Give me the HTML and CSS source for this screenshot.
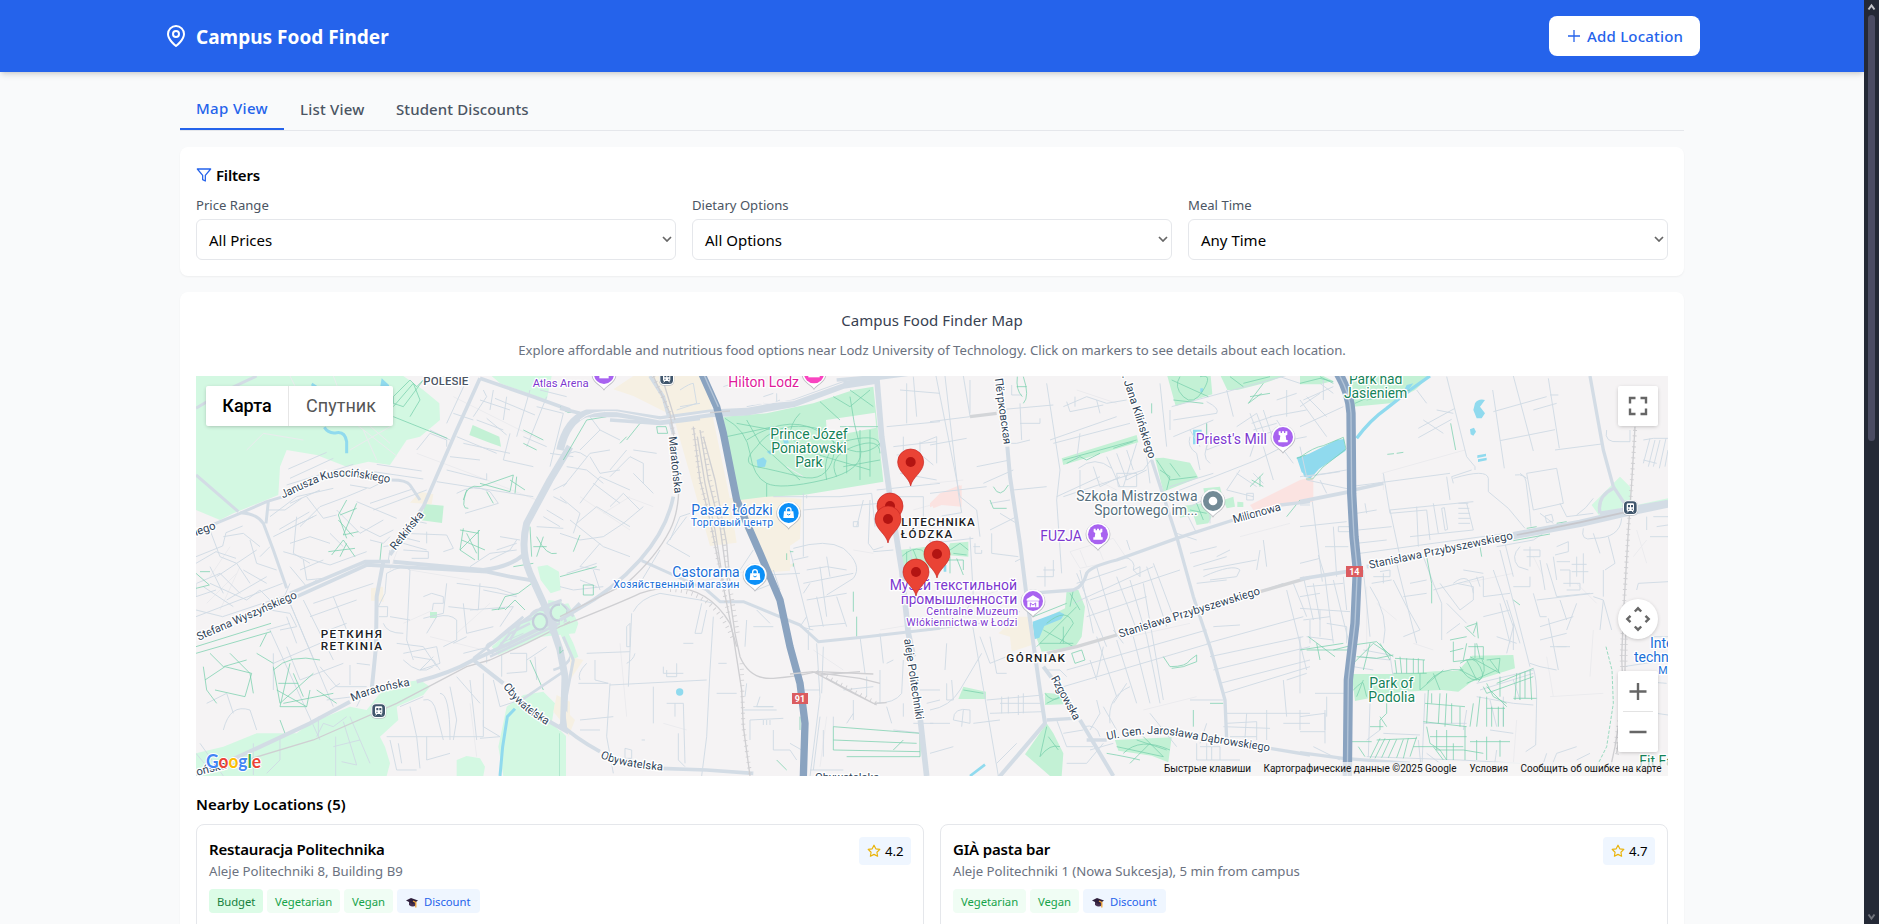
FILE: index.html
```html
<!DOCTYPE html>
<html lang="en">
<head>
<meta charset="utf-8">
<title>Campus Food Finder</title>
<link rel="stylesheet" href="styles.css">
</head>
<body>
<div class="page">
<header class="header">
  <div class="header-inner">
    <div class="brand">
      <svg class="brand-icon" viewBox="0 0 24 24"><path d="M20 10c0 6-8 12-8 12s-8-6-8-12a8 8 0 0 1 16 0Z"/><circle cx="12" cy="10" r="3"/></svg>
      <h1 class="brand-name">Campus Food Finder</h1>
    </div>
    <button class="add-btn"><svg class="plus" viewBox="0 0 16 16"><path d="M8 2v12M2 8h12"/></svg><span>Add Location</span></button>
  </div>
</header>
<main class="main">
  <nav class="tabs">
    <button class="tab tab-active">Map View</button>
    <button class="tab tab-list">List View</button>
    <button class="tab">Student Discounts</button>
  </nav>
  <section class="card filters">
    <h2 class="filters-title"><svg class="funnel" viewBox="0 0 24 24"><path d="M22 3H2l8 9.500V19l4 2v-8.500L22 3z"/></svg>Filters</h2>
    <div class="filter-grid">
      <div><label class="label">Price Range</label><div class="select">All Prices<svg class="chev" viewBox="0 0 10 6"><path d="M1 1l4 4 4-4"/></svg></div></div>
      <div><label class="label">Dietary Options</label><div class="select">All Options<svg class="chev" viewBox="0 0 10 6"><path d="M1 1l4 4 4-4"/></svg></div></div>
      <div><label class="label">Meal Time</label><div class="select">Any Time<svg class="chev" viewBox="0 0 10 6"><path d="M1 1l4 4 4-4"/></svg></div></div>
    </div>
  </section>
  <section class="card map-card">
    <p class="map-title">Campus Food Finder Map</p>
    <p class="map-sub">Explore affordable and nutritious food options near Lodz University of Technology. Click on markers to see details about each location.</p>
    <div class="map">
    <svg class="map-svg" viewBox="0 0 1472 400">
      <defs>
        <g id="pin"><path d="M0 0C-4-26-39-42-39-72a39 39 0 0 1 78 0C39-42 4-26 0 0z" fill="#ea4335" stroke="#c5221f" stroke-width="2"/><circle cy="-72" r="15" fill="#b31412"/></g>
        <g id="poi"><path d="M0 50C-7 36-37 27-37 2a37 37 0 0 1 74 0C37 27 7 36 0 50z" fill="#a5a9b0" opacity=".75"/><path d="M0 46C-7 34-35 25-35 0a35 35 0 0 1 70 0C35 25 7 34 0 46z" fill="#fff"/><circle r="30"/></g>
        <g id="bag" fill="#fff"><path d="M-14-5h28l2 20h-32z"/><path d="M-7-4v-5a7 7 0 0 1 14 0v5" fill="none" stroke="#fff" stroke-width="4"/><path d="M-5 3q5 6 10 0" fill="none" stroke="#0b90f8" stroke-width="3"/></g>
        <g id="rook" fill="#fff"><path d="M-13-17h6v5h4v-5h6v5h4v-5h6v10l-5 3 2 13h4v7h-28v-7h4l2-13-5-3z"/></g>
        <g id="train"><rect x="-23" y="-22" width="46" height="47" rx="15" fill="#b5b9c0" opacity=".7"/><rect x="-22" y="-22" width="44" height="44" rx="14" fill="#fff"/><rect x="-19" y="-19" width="38" height="38" rx="11" fill="#40566c"/><rect x="-11" y="-13" width="22" height="23" rx="4" fill="#fff"/><path d="M-7-8h6v7h-6zM2-8h6v7h-6zM-7 3h4v3h-4zM4 3h4v3h-4z" fill="#40566c"/><path d="M-9 14l4-5M9 14l-4-5" stroke="#fff" stroke-width="3"/></g>
      </defs>
      <rect width="1472" height="400" fill="#f5f3f4"/>

      <!-- west: Polesie, Retkinia -->
      <g transform="translate(-6 -6) scale(.33333)">
        <g class="park-light">
          <path d="M18 18H640L700 60 748 100 750 150 690 200 650 210 600 285 535 275 470 290 380 255 290 240 270 290 265 375 130 430 90 450 18 420z"/>
          <path d="M18 1218V1150L100 1130 200 1090 320 1090 360 1060 480 1010 530 1020 570 970 620 940 690 930 720 950 700 975 620 1010 625 1050 570 1100 585 1130 600 1180 590 1218z"/>
          <path d="M800 1218V1170L830 1158 870 1165 885 1190 880 1218zM940 1218L925 1130 950 1010 1000 975 1060 965 1095 1000 1085 1060 1128 1100 1128 1218z"/>
          <path d="M905 18H1085L1070 90 930 40zM1042 590l30-5 35 20 5 55-30 10-30-40zM1075 690l40 5 15 60-30 15-30-20zM905 830l100-85 50-30 80-15 30 60 -10 30-100 10-130 55z"/>
        </g>
        <path class="park" d="M848 165l80 35 5 30-30-10-65-25zM705 402l56 5-5 52-62-8zM720 726h21v18h-21z"/>
        <path class="sand" d="M690 365l40 8-5 30-65-5zM543 655l36-5 2 45-38-3zM1100 975l40 20v90l-50-60z"/>
        <path class="water-line" stroke-width="9" d="M365 42Q400 60 395 100M403 172Q415 192 440 188T470 215L470 250M975 1016L952 1040 938 1130 930 1218"/>
        <path class="water" d="M575 25l22 20v14h-28z"/>
        <g class="faint"><path d="M170 240l50-50 120 20M340 60l80 60M450 90l150 130M520 180l40 90M480 240l120-70M300 18l60 120M430 18l50 130 140 110M600 600l30-80M640 760l90-40M60 620l60-90M90 720l60-130M680 250l160 60 200 80M790 80l260 130M50 700l90-90M660 600l180 30M720 800l160 40M840 1000l20 160M900 700l-100 90"/></g>
        <g class="street">
          <path d="M295 297L410 247M300 325l130-60M290 345l200-62M560 283l135 20M550 305l150 22M480 345l60 10 60-30M500 395l120 50M540 400l125-42M550 420l160-60"/>
          <path d="M240 440l80-60 110-25M330 470l60-60 80-30 60-25M300 400l90-40M350 380l50 65 40-10M235 420h50l50-35M268 478l90-52M250 500l130-65"/>
          <path d="M18 560l80-32 10-40 50-20M18 580l60-35 60 20M60 480l30 80 50 20 60-40M100 500l60-10 50 40M80 620l60-40 40 60M60 640l110 50 40-30 40 40M40 650l90 60M110 690l120-70M20 640l70-30 60 60M210 560l30-30M180 510l20 70 60 20"/>
          <path d="M290 480l80-40M300 520l60-20 60 20M320 440l-10 110 50 30M280 545l140 40 110-40M300 590l50 60 30-20M340 570l10 60 50-5M420 490l40 40M440 420l70 70 70-40M510 470l60 30 40-20M540 510l40 10 20-20M330 600l70-30"/>
          <path d="M18 720l80 20 210-70M18 740l260-100M60 590l40 80M300 640l-30 70M160 600l70 40M18 795l90-30M200 740l40-20 60 10 20 40-50 10M230 780l70-20M290 740l30 80"/>
          <path d="M300 700l70 165M340 690l90 180M430 680l60 150M370 700l180-60M360 740l140-50M390 790l80-30M300 700l130 310M240 780l150 330M250 880l140-60M330 930l130-50M390 890l50 60h90M420 960l30-20M480 885v60M500 880l40 5"/>
          <path d="M590 610l-5 60-20 40M590 610q50-30 70-10l-10 210 20 60M600 740l60 10M580 760q10 30 60 30M565 710h28l-1 30h-25M640 850l100-20 10 50-60 20M670 860l60 10 20 30M690 900l40-40M640 870q50 50 90 20M620 820l80 10 40 60"/>
          <path d="M700 680l25-10 35 10v20h-30l-3 20M770 640l-10 90-60 15M800 640l120 15 60 20M870 640l-5 80-90-10M880 660l100 20M820 700l10 90 80-20M710 790l30-50q40-10 60 10v60l-40 20M790 820l40-20M840 720l130-10-40 60M930 820l70-30"/>
          <path d="M580 530l60-10 70 20M600 540l-5 30M640 540l75 5v20h-50M630 500l60 15M710 485v35M640 490l130 5 20 40-30 10M660 450l50 10M740 335l290 45M770 300l120 30v-20M800 370q50-30 100-5l25 35-100 30"/>
          <path d="M680 240l40-50 50 20v20M720 180l60 30M770 160l60-130M790 130l60 20M800 200l120 50M780 260l90 10M820 220l140 30M850 140l40-60 -10-20M860 150l80 30M870 90l90 30M910 60l-10 60M950 80l-10 70M890 145l60 50M915 85l120 50M1020 60l-40 140M1070 80l-60 150M1000 200l70 30M960 190l-20 80 90 20"/>
          <path d="M1050 60l80 20M1040 110l80 20M1080 250l70 10M1120 130l-40 160M1090 360l40-20M1090 380l40 20M1070 420l50 30M1060 440l50 30M930 500l60 10M920 540l60-20M900 570l60-30 20-30M1040 470l80 5M840 590l60-40 80-10"/>
          <path d="M935 855v65M960 850h50v55l-60 5M1010 870l60-40M1040 930l-5-70M890 880v-30M820 850l80-20"/>
          <path d="M380 1100l20-40 30 10 40-30M460 1055l40 130-45-10M480 1040l60 140M500 1010l20-40M430 1130l80-20M385 1040v60M410 990l80-10M590 1100h290v-50M600 1110l20 90h60M625 1120l10 60M680 1100l10 95M700 990q30-10 40 40l20 80M660 1010l20 90M700 980l-70 30M750 970q30 0 30 140M780 950l20 100 -10 60M840 930l20 180M800 920l70 80M880 910v160l50 30M910 930l20 80 60-20M710 1100v70l70-20M930 1100l-60 5M190 1120v95M270 1100v70l-40 40M437 1100v118"/>
          <path d="M18 640v40l60-20M18 1150l50 60M30 1120l70 98M130 1030l-20-60-60 30M100 1080q20-80 80-60l20 60M250 850v110M290 830l40 100"/>
        </g>
        <g class="trail">
          <path d="M610 80l50-50 20 20 20-20-60 80-30-10zM610 110l60-70 20 50-30 50M610 140l100 40 62 25M470 390l-25 45 25 70M450 435l50-20M445 450l45 50M500 400l-40 95 45-10M415 545l80-10M425 555l35-45 35 50M470 520l-20 40M575 520l-5 50"/>
          <path d="M820 390q10-50 50-40l100-35-10 50-90-25M830 360q-20 60 5 55M980 320l-5 50M960 330l45 30M890 365l20 35M810 480l55 10M820 475l-10 65 45 30M865 480v90M810 540l60-60M830 490l30 60M885 540l-70-30"/>
          <path d="M18 610l40 35-40 10M30 605h30M18 830l225-70M18 850l225-65M60 850l40 40 70-20M45 930l60-40 80 20-20 70-90-20M40 890l10 70 30 40M250 900q50-50 140-30M250 890l20 110 100-90M310 910l30 70M265 940h60M280 1000l150-30M260 960l90 50M300 880l-30 130h80l10-50M380 960l60 40M120 850l60 60M180 910l10 60M210 830l20-40M200 850l50 30M270 1050l15 40"/>
          <path d="M905 720l40-5M925 720l20-40 40-10M945 720l30-30 30 30M985 670l40-30M1040 500q30 60 60 50M1060 500l-20 60M1030 530h40M1020 470l5 90M1110 1090v128M970 590l60-10M1060 960l-40-90M1000 180l60 30M1000 220l40 20"/>
        </g>
        <g class="rail"><path d="M18 1215L370 1110 620 1000 830 890 900 870M900 870L1010 820 1140 755"/></g>
        <g class="road">
          <path stroke-width="9" d="M18 115L110 60 200 18M18 315L145 425M18 485L150 430 230 395 280 380M605 330Q650 330 660 345L690 390M150 428Q200 430 220 460L250 540 290 655M235 395L228 460"/>
          <path stroke-width="11" d="M870 25L800 180 700 410 600 555M300 670L525 575 600 575M320 680L530 585 890 605 960 620 1030 632M870 25L1030 80 1140 120"/>
          <path stroke-width="12" d="M610 575L880 600Q960 590 1000 555M580 575L560 680 558 830 545 960M18 1218L200 1135 360 1060 480 995M680 935Q780 910 850 870L960 820 1140 730M850 870L940 940M1070 1050L1140 1090"/>
          <path stroke-width="21" d="M1140 230L1080 330 1010 460Q990 540 1020 610L1070 720 1110 840 1125 920 1120 1080"/>
          <path stroke-width="8" d="M850 865L960 780 1060 710 1115 690M910 850q-40-20 0-35L1000 740M920 840l40-50 60-30M960 810l30-50 50-20M1020 740q20-40 70-5l10 40M1060 720q50-50 90 20M1080 790l30-90M1090 900q70-20 50-80M900 860L1130 750M980 1000L1120 905"/>
          <path stroke-width="11" d="M1140 730l30-30"/>
        </g>
        <g class="circ"><ellipse cx="1050" cy="755" rx="21" ry="24"/><circle cx="1106" cy="728" r="24"/></g>
      </g>

      <!-- centre west: railway, Poniatowski park -->
      <g transform="translate(364 -6) scale(.33333)">
        <path class="sand" d="M220 18h220l20 130 50 240 20 130-80 10-50-180-60-210-120-60-60-20zM500 385l130-8 95 10-5 120-30 20v75l-60 5-60-100-30-60zM640 590l70-10-30 20zM30 860l40 10-40 60zM15 1020l30 30-20 50z"/>
        <path class="park" d="M490 140L620 130 760 100 880 60 940 50 970 335 730 375 620 380 540 390 510 290z"/>
        <path fill="#f5f3f4" d="M798 150l147-22 4 45-148 28z"/>
        <path class="park" d="M1020 540l120-15v70l-110-5z"/>
        <path class="park-light" d="M0 700l20 20-10 40 30 60 15 40-20 10-35-80zM0 1080l18 18-5 120H0z"/>
        <path fill="#fbe3e1" d="M1115 395l90-50v65l-60-5-25 10z"/>
        <path class="water" d="M590 270l20-8 10 10-5 18-22 3zM620 245l12-5v15zM670 210l14-3 2 12-14 3z"/><circle class="water" cx="359" cy="966" r="11"/>
        <g class="faint"><path d="M200 380l80 30M130 430l80-50M60 380l150 100M680 290l50 30M400 640l180-40M180 820l20 220M310 1060l70 20M800 1040l-20 150M760 840l90 60M880 540l60 10M1060 420l70-20M960 780l120-20"/></g>
        <g class="street">
          <path d="M20 260q20-30 60 0M20 290l60 10 50 40M10 350l80-100 60-10M60 240l60-60 60 30M90 260l30 50 60-10M120 180l-30-40M200 240l-50 60M150 320l60-60 40 20v60M100 340l80 60M60 400l60-80 90 40M50 460l60-50 100 60M0 380l60 50-20 60M150 410l40-40 50 50M190 460l60-50M220 310l60 60M130 500l60-40M0 490l60 20 70-10M30 450l100 80 80 30M20 610l90-30M120 520l-60 70M60 590l60 10M0 650l40 10 90-10M100 600l20 60M60 630l50 20M220 240l70 10"/>
          <path d="M330 510l30-70 30-10M380 440l-60 80 70 40M250 560l60-90M300 540l-60 100"/>
          <path d="M360 60q30-20 40-20l10 60-60 20M420 100l-60 10M490 50l30-10M560 110l50-10 60 10M610 80l30-10M650 70v30M660 90l-20 10"/>
          <path d="M1020 60l120 10M1040 40v120M1060 20l10 120M980 170l160-15M1000 230l130-15M1010 255h70v-40M1030 200v60M1080 220l50-20v80M1090 260l30 25M950 360l190-20M970 380h120v60M1020 310l110 20"/>
          <path d="M640 380h200l95-10 10 100M730 370v190M730 420l230-20M740 385v-10M880 455h15v15h-15zM910 390l-20 80M930 390l-5 130 15 20 30-10"/>
          <path d="M700 535q100-30 150 0 60 50 30 90l-80 50M690 540l60 240M700 570l45-10M740 600l60-10 60 10M730 640l150-30M740 690l120-20M780 590l20 150M800 560l10 60M830 680l30 90M770 680l20 90M745 770l110-10M720 610l-100 5M750 640l-20 30M580 540l-40 60M640 600l20 60M640 640l-50 20-30-20M740 740l-20 30 40 10"/>
          <path d="M1000 540l-60 5M1050 530l10 70M1110 510l10 80M960 400l20 80"/>
          <path d="M220 725q20-40 80-55l120 20 40 10M215 730l-10 220M80 850l130-5M60 930q-10-20 20-50M105 870v60l40 10M200 770v60h10v-70zM425 700l-20 90h20l15-70M370 820h30M460 740l-10 160 -10 200-15 118M475 880h25M150 945l290-15M150 940l-10 160 20 110M55 940h90M60 1050l100-10M60 1080h60M200 880q20-10 25-30M310 890v20h60M320 900v20h30v-40M345 1000v40M320 1000h50l5 180M280 950v110M470 970h60M560 940l-5 40M600 980l-10 30h50M550 1020h100M580 1010h60M570 1050l100-5M570 1050v60M610 1050v15M620 1050v15M630 1050v15M690 1120l35 20M640 1080v60h50l20 30M355 1090v80l20 20M195 1135v30h20v-25zM245 1110h10"/>
          <path d="M560 750l-5 80M590 720l40 40M580 770h60M720 960h60M770 820l10 160-30 240M745 780v60M790 830l-5 140M900 800l15 110M960 790l10 90M980 880l20-10M1030 870l-5 100q-20 30-80 30M850 960l90-10M880 990v60M960 900v100M920 920v60M860 1060l20-30M1030 1000v40M1060 1060h60M980 1010l15 50M1000 1080l90 10M780 1040l-20 160M820 1070v-30M750 1200h100M790 1080v80M1080 960h60M1100 1000l40-10"/>
        </g>
        <g class="trail">
          <path d="M0 110q30 30 40 10M10 270l70-120 60-10M200 210l40-50 60-20M180 220l20-20M60 495l-20 50M0 620l110-30M70 645h30v30H70zM290 170h28l5 20h-30z"/>
          <path d="M495 145Q560 180 570 250T620 340 790 330 900 230 870 80M560 150L600 220 720 330M500 200L640 170 760 250 930 300M560 210Q700 120 800 200T960 220M590 230Q640 160 740 170T820 260 720 320 590 290 590 230M800 330Q780 230 870 210T960 230M830 320Q800 260 880 230T960 250M620 380L620 340M900 180V330M860 190V310M930 180V320M720 130Q690 160 690 200M780 95L840 150M820 80L870 110 930 60M870 60L940 110M840 170L960 170M850 290L960 270M530 160L640 180"/>
          <path d="M1025 560q30-30 60-20l30 30M1040 545v40M1060 540l20 50M680 550v20M690 545h10M880 665v60M890 740v60M700 590v-10M820 1070l260 20M820 1110l250 10M820 1140l260 5M820 1070v70M1080 1090v70M860 1160h220M1000 1140l30-30M0 830v20l10-10M650 1170l30 30M720 1040v40"/>
        </g>
        <g class="road">
          <path stroke-width="23" d="M0 240Q20 150 80 130L170 130 300 150 450 130 560 125 700 100 850 45 950 30"/>
          <path stroke-width="11" d="M0 115L60 130M150 150L300 160 420 145M830 30L950 20M270 18L310 80 340 190M950 25L1140 0"/>
          <path stroke-width="17" d="M950 18L965 200 990 380 1025 600 1045 790 1060 860M1080 1040L1100 1218"/>
          <path stroke-width="11" d="M340 380Q320 480 240 570T50 720L0 750M0 1060Q40 1100 120 1145M300 1195L440 1200 580 1210"/>
          <path stroke-width="9" d="M245 572L440 660 480 695 550 695 720 765 775 815 920 800 1140 775M10 800L40 870 15 1000 10 1080"/>
        </g>
        <path fill="none" stroke="#f5f3f4" stroke-width="3" d="M60 150Q90 120 170 125L300 150 450 128M480 112L700 92 850 38"/>
        <g class="rail">
          <path d="M280 18L330 130 350 250Q370 400 330 480T200 640L0 740M305 18L345 150"/>
          <path d="M400 170L420 330 450 450 480 600 500 700 520 800 545 960 550 1070 570 1218M420 180L445 330 480 470 505 650 525 790 540 860Q570 930 640 925T770 905L940 912"/>
          <path d="M430 200L465 330 500 520 510 640M412 200L435 340 465 480 490 640M760 905L860 960 940 1000 980 998M770 908L900 925 960 940M780 915L900 905M800 925L950 1005M0 770Q200 690 240 670 420 610 510 760L530 830"/>
        </g>
        <path class="rail-ties" d="M400 175l20 155 30 120 30 150 25 130M425 185l25 145 35 140 25 180 25 150M280 20l50 110 20 120M545 880l5 190 20 140M330 660q130 0 190 150M770 905l180 95"/>
        <path class="motor" stroke-width="22" d="M425 10L470 110 490 190 530 390 600 550 660 690 690 830 720 940 735 1060 730 1220"/>
        <path class="motor-mid" d="M430 10L475 110"/>
        <path class="rail" d="M690 912l70-7M450 128l60-5"/>
      </g>

      <!-- centre east: Gorniak -->
      <g transform="translate(734 -6) scale(.33333)">
        <g class="park">
          <path d="M712 18h130l5 55-110 35zM872 18h190l-60 22-80 20-30 0zM395 265l225-70 5 22-225 68zM675 265l25-2 80 15 25 45-105 42zM820 355l50-5 5 20-50 10zM745 410l70-10 30 40-10 20-35 5-10-30-40 8zM880 390l30-10 5 30-25 5zM922 395l18 2v14h-18zM410 660h35l20 50-10 90-20 30-100 15-30-80 100-50zM60 520l55-5v45l-70-5zM100 950l68 15v22H85zM345 968l50 5 5 30-55 2zM350 1060l20 30 30 60-5 68H360l-75-65zM555 1110l170-8-10 75-50-20-100-15z"/>
        </g>
        <path fill="#fbe3e1" d="M960 405L1110 330 1150 320V395L970 420zM0 400l30-30 60-25v55l-60 0-30 12z"/>
        <path class="sand" d="M205 790l60-50h40v85l-60 20-5-45z"/>
        <path class="water" d="M308 755l80-30 15 8-10 15-50 20-15 35-15 5zM1100 262l40-10 0 70-25-15z"/>
        <path class="water-line" stroke-width="8" d="M815 183h-22v40M120 1218l45-34M815 55v12M45 585v20"/>
        <g class="faint"><path d="M420 545l130-40 40 60-140 30zM450 540l20 50M500 520l20 50M440 60l120 40M0 340l100-10M500 330l60 30M150 680l60-20M600 800l180-40M640 1020l160-40M930 500l150-40"/></g>
        <g class="street">
          <path d="M18 18L90 380 140 420 150 500M45 18l40 350 10 60-60 10M100 18l20 120M120 30v100M0 155l120-15M200 120l170-15M245 45v30h30M270 100l5 110M270 160h60v-15M220 220h40l40-10M0 225l110-20M0 370l170-20M140 290l100-20M160 340l90-40M180 400l60-10M210 430l50 30M180 480l80-40M185 490v60l80 10M130 530h20M135 520v30h20v-10M120 500l10 180-30 60M0 520l130-15M255 575l20-10M320 620h50v-50M340 600h35M345 590v60"/>
          <path d="M400 110l70-30 60 20 60-10M410 95l10 30 100-20M435 80v30M350 40l40 260-10 90 15 220M500 90l10 40M560 140l-200 70M370 220l230-60M250 360l100-10M440 270l10-80M445 295q50-40 100 0M450 300v60l50 15M490 290l20 60 60-30M530 260l40 90M560 250l30 80 60-30M590 240l20 60M620 220l-40 130M560 310h60v40h-55zM400 380l240-80 30-40M380 380l130-60M650 260l10 80"/>
          <path d="M690 40l20 190M720 120v60M725 110l350-95M830 95q40 20 30 35l-130 20M730 200l120-50M890 60l20 80M780 180l30 50M780 200q-10 30 20 50l10 50M830 160v80l50-20M840 210q-30 50 0 70M700 380l280-110 80-40M850 310l-130 40M960 260l20-60M930 300l-40 60 80 20M920 310l60 40M970 310l30 30M1000 230l30 100M1060 240l30 40M920 170l60-40M960 130l30 80M980 130l30 80M1000 120l30 90M965 160l60-20M970 180l70-20M975 200l70-20M1040 150l40 60 50-10M1020 140l110-20M1070 60v80M1100 70l-60 20M1050 20l60 20"/>
          <path d="M740 490l60 20M770 430l30 60M780 410l40-20M840 460v-40M950 370h20v20h-20zM780 550l80-20M790 590l100-30M820 600l160-30M820 620q90-40 110-20l-10 20-80 10M860 560l40-20M800 640l90-10M990 540l-10 60M1000 510l10 80"/>
          <path d="M440 610l90 220M450 600l40 190M500 590l60 210M560 620l60 160M600 630l50 170M640 640l60 350M650 590l60 180M670 580l60 160M500 800l60 180M560 810l60 190M610 800l50 200M650 800l40 200M430 700l240-110M440 640l150-50M470 740l180-60M480 690l270-90M580 560q40 10 30 40l20 20v-30l-20 10M600 540l-10-30"/>
          <path d="M400 950l440-130M410 900l420-120M520 830l-20 90M480 870l20 60M540 1060q-10-80 60-110M480 1080l30-50-10-40M460 1070q40-10 50 30M560 1080l-40-70M580 820l-30-40M840 720l220-80M850 770l80-5M830 820l290-80M840 860l280-60M850 900l290-70M870 940l270-70M880 970l260-80M1070 660l60 240M1090 640l40 100M1070 930l60-20"/>
          <path d="M890 1030h250M890 1060l90-5v55M950 1030l-5 75M900 1100h80M880 1070l140 5M1010 1020v90M1060 930l10 110M1110 1020v60M1060 1060h80M800 1120v50h130M810 1130h60v40M830 1120v50M845 1120v50"/>
          <path d="M0 780l150-20M50 820l-5 80M50 940v50h20l-5-60M0 1020q60-10 90-60L155 850M150 800l30 80 50-20M180 800l20 110h30M70 1050q0-40 50-30v40zM100 1020l-5 50M125 750l80 468M170 990l170-15M180 1030l160-5M215 980v50M235 980v50M265 975v60M280 970v60M210 1000h130M130 1060l80-10M200 1180l60-60M0 1060h60M0 1150l70-20M380 1050l30 80h80M400 1090l60-10M350 900h40l20 20M410 1180h60l50-60M190 690h70M170 730l100-5M230 660l30-10M480 1140l70-20M830 1060l-20 60M550 1000l40-60M660 1030l80 100M780 990h100"/>
        </g>
        <g class="trail">
          <path d="M262 20q-5 40 15 60M280 20q20 60 0 80M260 50h30M725 30l110 50M750 20q-20 30 10 60t60-20-10-40M730 90l90 10M900 20l40 30M940 40l80-20M1000 40l-45 60 40-30M960 80l60-10M400 270l220-60M410 280l40-20 20 10 40-20M550 235l60-20M680 270l40 60 80-10M690 300l30 20-10 40M720 280l30 40M780 420l50 10M800 400l20 50M350 760q60-50 80 0l-40 60M320 830l120-120M420 670l30 50M340 780l90 50M310 740l100-40M430 660l-10 50M330 820h100M400 770v50M60 540l30-20 25 20M70 550l40 5M50 570h50v30M60 560v50M80 565l20 50M0 570h60"/>
          <path d="M190 350q20 40 45-5M180 390l10 25h40M665 100v30M830 160v60M965 330l35 20M990 320v30M960 350l40-40M100 960l60 10M345 970q20 30 50 10M350 1000l40-20M350 1070l-20 90M355 1100l30 40M330 1160q30-40 60-30M560 1130l140 30M600 1180l60-60M640 1100l60 60M620 1110l90 30M580 1150q50-50 140-10M530 1150q60 10 100 20M425 850l30-10 10 30-30 10zM720 890q50 0 60-20l20-15v20l-40 15-35 5M700 860l20 30M790 1020v50M840 1000h40M1070 440l40-50M1100 265l30-10"/>
        </g>
        <g class="road">
          <path stroke-width="12" d="M232 230L240 320 270 520 290 680 310 820 330 960 345 1060 200 1230M340 890L370 930M450 1050L550 1218"/>
          <path stroke-width="10" d="M300 670L430 660Q460 650 470 610 480 590 560 570L740 505 910 450M1050 405L1140 395M665 270L740 500 790 680 840 830 885 990 890 1110M350 1050L430 1045M470 1110L530 1110M1020 1135L1140 1155"/>
          <path stroke-width="10" stroke="#d3d5d8" d="M350 850L440 830 560 795M990 665L1140 622M120 140l80-10"/>
        </g>
      </g>

      <!-- east: Podolia -->
      <g transform="translate(1104 -6) scale(.33333)">
        <path class="park" d="M155 18H390L345 60 270 100 160 110zM0 18h70l30 15-40 10H0zM155 912h150l100-8 70-2 40-45 125-2 5 40-130 40-40 30-50-5-120 5-140 28z"/>
        <path class="park-light" d="M875 405L960 320 990 350 995 400 900 440zM1010 405L1104 385V405L1010 425z"/>
        <path fill="#fbe3e1" d="M0 330l10 0 25 60-35 0z"/>
        <path class="water" d="M0 265l110-55 22-3 5 35-80 55-25 28-20-5zM525 100q10-15 30-10l-15 20 15 20-10 15-15 0-10-25zM510 178l12-5 6 12-8 12-8-4zM532 256l26-5v8l-26 5zM534 268l26-5v8l-26 5zM320 45l20-5-30 40-10 5z"/>
        <path class="water-line" stroke-width="10" d="M170 205Q210 150 260 115L330 60 390 18"/>
        <g class="faint"><path d="M245 310l250-70M250 320v40M490 640l150-30M700 560l30 60M640 980l50 5M750 980l160-10M740 860l20 120M830 640l60 60M880 780l-10 140M1010 480l30 100M1000 560l40-50M230 700l60 50M200 650v200M340 820l60 20M650 1050l-10 130"/></g>
        <g class="street">
          <path d="M0 90l80 110M20 80l60 60M0 170l130-60M60 40l40 30M0 110l60-40M10 90l90-40M70 30v60M0 230l20 90 100-15M60 330l20 40M0 320l80-10 60-10M20 330l140 30M150 350l300-40"/>
          <path d="M350 60l30 40M355 175l110-60M355 203l100-55M370 150l60 40M410 120l50 10M440 20l40 160 20 80 25 30v10M460 325q100-30 105 0v40l60 50 50 60M460 340l-5-20 60-20M578 60l35 235M640 18l60 225M580 125l160-45M600 212l165-33M745 25l33 210M750 75h25M765 240l140-18M700 120l70-20"/>
          <path d="M645 315q30-5 33 20l10 80 5 55M680 310l90-15 20 105-90 20zM660 310l20 15M735 438l20-5 5 20-20 5zM720 430l40 30M780 400l20 40 80-10M880 385q-20 30-50 50M850 475q-10 40 30 30 80 0 85-60M920 180q-10 40 40 35h30v-35M1030 210l30-5h44M1030 280l20-75M1045 290l20-80M1060 290l20-80M1078 295l20-90M1095 290l9-50M1030 270l40 10"/>
          <path d="M37 395l30 240M0 405h30M0 470l140-15M115 470h40v15h-40zM195 400l5 30M170 430l60-10M175 480l100-10M170 520l90-10M270 420l30 140M250 310l20 120 110-10 10 90M270 420l250-25M440 320l10 70M350 410l5 120M400 400l15 90M425 415l8-2 10 65-8 3zM475 400h30M475 415h33M475 430h35M475 445h35M475 460h35M500 400l20 80M330 500l190-20"/>
          <path d="M180 550l440-60M590 530l110-20 30-20M600 540l90 350M610 500l30 120M660 530q-30 30-5 60l30 10M670 540h50v20h-40M690 530v60M770 530l35-15v30l-40 10M760 560l10 70M770 575h40M780 600h30v50M830 560v60M850 550v90M815 583h45M815 605h50M720 570l15 90M740 580l30 100 100-10M790 640h50v20h-40M640 650h50v-30"/>
          <path d="M0 580l60-15M55 555l20 65M100 470l10 150M75 530h70M10 620l30 130M20 650l110-10M40 640l20 110M75 620l25 200M100 630l50 200M130 620l10 100M0 715l150 10M10 750l80-10M60 720v80M0 680l60-10M20 800l80 10M30 750v70M0 800v170M80 760l60 10v50M45 970h90M0 1040l75-10v50M80 980v60M0 1085h75M75 1020v100M40 1130l80 40"/>
          <path d="M190 600l20 200M210 650q60 90 40 170M220 620h50v-20l-30 5M250 610v30M215 640l60-10M280 630l40 80 40 70-50 20M290 580l60 240M310 680l70-10M330 640l50-10M370 560l30 80 25 60v110M400 660l150-40M420 640l60 80 40-30v-40l-50-10M440 700l60 60M460 640q50-40 60 30M490 600l60 10M530 620l10 30M550 620v60l80-10M580 600l60 170M600 700l30 120M620 690l40 130M550 740l80-20M480 760l-40 30M590 800l60 20M620 850l20-80"/>
          <path d="M710 690l170-20M700 670l20 70h20M720 770l100-30M745 745l30 155M720 810l80-20M780 690l20 60M830 700l-30 80M750 830h50M770 830h40M690 880l30 10 50 10M640 760v80M880 680l30 10-10 90M910 600v80M910 690l25 90M925 500l20 80-30 20M880 490l20 60M1010 660l5-20 90-5M1060 440h44M1070 470l34-5M1040 440v40M1050 500h54M970 930l130 10M970 890l134-20M1050 800h54M1070 1030l34 5"/>
          <path d="M180 860l90 10M190 840l80 15 10 70M160 890l60 10M210 1000l-5 160M240 1080l-40 30M250 1090l110 5M375 970l-10 240M355 1110l10 100M700 895q10 30 10 90l-3 140-30 20M640 1090l-70-10M530 980l110 20M640 1000l60 5M370 1060h130M500 1020l-10 60M570 990l20 80M610 980v90M640 930l20 60M740 1150l-20 60M830 1130l-60 20-20 50M870 1150l-40 20M200 1160l280 10 180 10M590 1140l-10 70M380 1150l80 60M700 900l-170 40M540 960l160-50"/>
        </g>
        <g class="trail">
          <path d="M0 262q40-30 70-35l60-25 8 35-70 55-30 35h-20M0 40l60-15 40 10M60 20l40 20M165 100l90-40M200 90l130-30M262 253l20-2M290 250l20-3M452 160l15 80M680 475l30-5M720 480l30-5M640 512l110-20M770 460l30-5M380 560l15 80v60M540 530l5 30M640 690l20 15"/>
          <path d="M0 840l130-20M25 800l80 60M50 820l10 50M20 840h140M100 840l60-15 70-10 40 40M170 860l60 5 50-10M160 880l60-60 60 40M210 820l-20 80M240 820l30 50M285 870l5 40M300 860l5 50M320 865v45M340 865v45M355 865v45M370 870v40M285 865l90 5M280 910h100M160 960q30-30 30-20l10 40M170 980l20-50M360 910v50M360 960l70-60M400 910l20 50M380 940q40-50 110-40"/>
          <path d="M450 810l50-10M460 815v60M450 845l40-10M460 875l90-10M500 820l-10 50M505 830h45v40M525 820v45M530 820l10 45M480 880q40-30 60 10t-10 40-50-40M480 900l60 30M500 870l30 60M545 865q20 40-10 70M560 870l40-5-5 40M570 870l30 40M500 940l90-40M510 860l90 50M590 940l110-45M600 920v60M550 950l10 20 140-50M650 910l-5 80M660 910v80M675 905v80M690 900l5 90M640 985h70M500 770l30-10-10 30M495 770l30 30M530 755l5 50"/>
          <path d="M375 1000l120 10M385 960l-5 100M395 970v30M420 970l-5 90M440 970l-5 100M455 1000v60M480 1010v60M370 1055l130 15M380 1070l10 50 30 20 20 30M410 1080v60h80l60 10M440 1080v90M390 1100h110M400 1130h90M495 1070v100M460 1120v50M520 1000l-10 70M540 980l-10 90M560 980v90M575 1010v60M595 1010v60M610 1010v60M560 1015h55M510 1115h120M530 1110v60M560 1100v70M600 1110v50M560 940l20 40 40 20M560 950l60 60M340 1130h60l30 40"/>
          <path d="M240 1105l-30 60M255 1105l-30 60M270 1108l-25 55M290 1108l-25 55M310 1108l-20 55M325 1105l-15 60M350 1100l-20 60M230 1110l120-5M155 1115h60M260 1000v30l-20 20v30M240 1040l20 30M210 1070h40M175 1130l20 30"/>
          <path stroke-dasharray="10 5" d="M918 830l18 70 4 100-20 130-30 60"/>
        </g>
        <g class="rail"><path d="M1005 170L995 340 985 480 970 740 965 860 970 980 945 1130 930 1200M978 740L975 900 975 1000 950 1150"/></g>
        <path class="rail-ties" d="M1005 180l-10 160-10 140-15 260-5 120 5 120-25 150M978 740l-3 260-25 160"/>
        <g class="road">
          <path stroke-width="11" d="M0 395L150 365M0 627L140 605M200 590L215 588M900 430L960 420 1104 395"/>
          <path stroke-width="22" d="M640 497L840 460 970 430 1104 402"/>
          <path stroke-width="10" d="M870 18L910 240 940 350M940 350L980 410M940 355Q890 380 900 430M0 1148L130 1165 330 1180M160 360l90-20"/>
        </g>
        <path stroke="#c7c7cc" stroke-width="5" fill="none" d="M650 495L840 457 970 428"/>
        <path class="motor" stroke-width="28" d="M115 10Q150 70 153 130L155 370 162 500 172 600 165 760 145 930 142 1220"/>
        <path class="motor-mid" d="M115 10Q150 70 153 130L155 370 162 500 172 600 165 760 145 930 142 1220"/>
      </g>

      <!-- labels -->
      <g class="labels" transform="translate(-6 -6) scale(.33333)">
        <path id="p1" fill="none" stroke="none" d="M279 386Q350 350 400 330 450 315 500 322L620 342"/>
        <path id="p2" fill="none" stroke="none" d="M938 950Q980 1005 1030 1040L1100 1085"/>
        <path id="p3" fill="none" stroke="none" d="M488 995Q550 965 665 946"/>
        <text class="area" x="700" y="46" textLength="135" style="fill:#4b5563">POLESIE</text>
        <text class="area" x="392" y="805" textLength="184">РЕТКИНЯ</text>
        <text class="area" x="392" y="841" textLength="184">RETKINIA</text>
        <text class="st"><textPath href="#p1" textLength="335">Janusza Kusocińskiego</textPath></text>
        <text class="st"><textPath href="#p2" textLength="176">Obywatelska</textPath></text>
        <text class="st"><textPath href="#p3">Maratońska</textPath></text>
        <text class="st" transform="translate(616 542) rotate(-51)" textLength="138">Retkińska</text>
        <text class="st" transform="translate(26 812) rotate(-23.500)" textLength="324">Stefana Wyszyńskiego</text>
        <text class="st" transform="translate(18 498) rotate(-20)">iego</text>
        <text class="st" transform="translate(22 1217) rotate(-14)">ońska</text>
        <use href="#train" x="566" y="1022"/>
      </g>
      <g class="labels" transform="translate(364 -6) scale(.33333)">
        <path id="p4" fill="none" stroke="none" d="M120 1163Q180 1192 320 1203"/>
        <text class="poi violet" x="-82" y="50" style="font-size:34px" textLength="168">Atlas Arena</text>
        <use href="#poi" x="132" y="12" fill="#a863f0"/><path fill="#fff" d="M118 15h28v10h-28z"/>
        <use href="#train" x="320" y="23"/>
        <text class="poi" fill="#e01a9b" x="505" y="51" textLength="212">Hilton Lodz</text>
        <use href="#poi" x="762" y="10" fill="#f944c0"/><path fill="#fff" d="M745 15h34v7h-34z"/>
        <text class="poi green mid" x="747" y="206" textLength="232">Prince Józef</text>
        <text class="poi green mid" x="747" y="249" textLength="226">Poniatowski</text>
        <text class="poi green mid" x="747" y="291" textLength="82">Park</text>
        <text class="st" transform="translate(326 200) rotate(84)" textLength="172">Maratońska</text>
        <text class="poi blue" x="394" y="435" textLength="244">Pasaż Łódzki</text>
        <text class="poi blue" x="392" y="467" style="font-size:32px" textLength="248">Торговый центр</text>
        <use href="#poi" x="686" y="429" fill="#0b90f8"/><use href="#bag" x="686" y="429"/>
        <text class="poi blue" x="337" y="621" textLength="202">Castorama</text>
        <text class="poi blue" x="160" y="654" style="font-size:32px" textLength="378">Хозяйственный магазин</text>
        <use href="#poi" x="585" y="615" fill="#0b90f8"/><use href="#bag" x="585" y="615"/>
        <text class="st"><textPath href="#p4">Obywatelska</textPath></text>
        <text class="st" transform="translate(1032 808) rotate(81.500)" textLength="245">aleje Politechniki</text>
        <text class="st" x="765" y="1232">Obywatelska</text>
        <rect x="696" y="969" width="48" height="33" fill="#db5c60"/><text class="shield" x="720" y="995">91</text>
        <text class="area" x="972" y="468" textLength="272">POLITECHNIKA</text>
        <text class="area" x="1022" y="503" textLength="155">ŁÓDZKA</text>
      </g>
      <g class="labels" transform="translate(734 -6) scale(.33333)">
        <path id="p5" fill="none" stroke="none" d="M532 1110Q590 1098 650 1092 720 1090 800 1110L1040 1148"/>
        <text class="st" transform="translate(194 26) rotate(82)" textLength="200">Пётрковская</text>
        <text class="st" transform="translate(576 18) rotate(72)" textLength="262">. Jana Kilińskiego</text>
        <text class="poi violet" x="797" y="222" textLength="214">Priest's Mill</text>
        <use href="#poi" x="1059" y="201" fill="#a863f0"/><use href="#rook" x="1059" y="201"/>
        <text class="poi gray" x="439" y="393" textLength="364">Szkoła Mistrzostwa</text>
        <text class="poi gray" x="493" y="435" textLength="310">Sportowego im...</text>
        <use href="#poi" x="849" y="393" fill="#738b96"/><circle cx="849" cy="393" r="13" fill="#fff"/>
        <text class="poi violet" x="331" y="513" textLength="125">FUZJA</text>
        <use href="#poi" x="504" y="493" fill="#a863f0"/><use href="#rook" x="504" y="493"/>
        <text class="st" transform="translate(912 460) rotate(-15.500)" textLength="148">Milionowa</text>
        <text class="poi violet" x="-121" y="660" textLength="382">Музей текстильной</text>
        <text class="poi violet" x="-88" y="703" textLength="350">промышленности</text>
        <text class="poi violet" x="-11" y="735" style="font-size:32px" textLength="275">Centralne Muzeum</text>
        <text class="poi violet" x="-71" y="768" style="font-size:32px" textLength="333">Włókiennictwa w Łodzi</text>
        <use href="#poi" x="309" y="693" fill="#a863f0"/><path fill="#fff" d="M309 676l19 11v5h-38v-5zM292 694h34v18h-34z"/><path stroke="#a863f0" stroke-width="3" fill="none" d="M301 710v-11l8 6 8-6v11"/>
        <text class="area" x="229" y="877" textLength="176">GÓRNIAK</text>
        <text class="st" transform="translate(570 803) rotate(-17.200) " textLength="442">Stanisława Przybyszewskiego</text>
        <text class="st" transform="translate(362 925) rotate(61)" textLength="146">Rzgowska</text>
        <text class="st"><textPath href="#p5" textLength="492">Ul. Gen. Jarosława Dąbrowskiego</textPath></text>
      </g>
      <g class="labels" transform="translate(1104 -6) scale(.33333)">
        <text class="poi green mid" x="227" y="42" textLength="160">Park nad</text>
        <text class="poi green mid" x="227" y="84" textLength="190">Jasieniem</text>
        <text class="st" transform="translate(209 596) rotate(-11.700)" textLength="440">Stanisława Przybyszewskiego</text>
        <rect x="138" y="588" width="51" height="33" fill="#db5c60"/><text class="shield" x="163" y="615">14</text>
        <use href="#train" x="991" y="413"/>
        <text class="poi green mid" x="274" y="954" textLength="132">Park of</text>
        <text class="poi green mid" x="275" y="996" textLength="140">Podolia</text>
        <text class="poi blue" x="1050" y="834">Inte</text>
        <text class="poi blue" x="1002" y="876">techn</text>
        <text class="poi blue" x="1075" y="911" style="font-size:32px">M</text>
        <text class="poi green" x="1018" y="1187">Fit Fa</text>
      </g>
      <!-- location markers -->
      <g transform="translate(364 -6) scale(.33333)">
        <use href="#pin" x="1052" y="348"/><use href="#pin" x="990" y="480"/><use href="#pin" x="984" y="519"/><use href="#pin" x="1131" y="624"/><use href="#pin" x="1068" y="678"/>
      </g>
      <text class="google" x="10" y="391.500" textLength="55" lengthAdjust="spacingAndGlyphs"><tspan fill="#4285f4">G</tspan><tspan fill="#ea4335">o</tspan><tspan fill="#fbbc04">o</tspan><tspan fill="#4285f4">g</tspan><tspan fill="#34a853">l</tspan><tspan fill="#ea4335">e</tspan></text>
      <rect x="965" y="386" width="507" height="14" fill="#f5f5f5" opacity=".75"/>
      <g class="legal">
        <text x="968" y="396" textLength="87" lengthAdjust="spacingAndGlyphs">Быстрые клавиши</text>
        <text x="1067.500" y="396" textLength="193" lengthAdjust="spacingAndGlyphs">Картографические данные ©2025 Google</text>
        <text x="1273.500" y="396" textLength="38.500" lengthAdjust="spacingAndGlyphs">Условия</text>
        <text x="1324.500" y="396" textLength="141" lengthAdjust="spacingAndGlyphs">Сообщить об ошибке на карте</text>
      </g>
    </svg>
    <div class="map-type"><span class="type-on">Карта</span><span class="type-off">Спутник</span></div>
    <div class="ctl full"><svg viewBox="0 0 40 40"><path d="M12 17.500v-5.500h5.500M22.500 12h5.500v5.500M28 22.500v5.500h-5.500M17.500 28h-5.500v-5.500"/></svg></div>
    <div class="ctl cam"><svg viewBox="0 0 40 40"><path d="M16.800 12.500l3.200-3.200 3.200 3.200M16.800 27.500l3.200 3.200 3.200-3.200M12.500 16.800l-3.200 3.200 3.200 3.200M27.500 16.800l3.200 3.200-3.200 3.200"/></svg></div>
    <div class="ctl zoom"><svg viewBox="0 0 40 81"><path d="M20 12v17M11.500 20.500h17M11.500 61h17"/><path d="M5 40.500h30" stroke="#e3e3e3" stroke-width="1" class="hair"/></svg></div>
    </div>
    <h2 class="nearby">Nearby Locations (5)</h2>
    <div class="places">
      <article class="place">
        <div class="place-top"><div><h3 class="place-name">Restauracja Politechnika</h3><p class="place-addr">Aleje Politechniki 8, Building B9</p></div>
        <div class="rating"><svg class="star" viewBox="0 0 24 24"><path d="M12 2l3.090 6.260L22 9.270l-5 4.870 1.180 6.880L12 17.770l-6.180 3.250L7 14.140 2 9.270l6.910-1.010L12 2z"/></svg>4.2</div></div>
        <div class="tags"><span class="tag budget">Budget</span><span class="tag diet veg">Vegetarian</span><span class="tag diet vegan">Vegan</span><span class="tag disc"><svg class="cap" viewBox="0 0 14 14"><path d="M4 7h7v3q-3 3-7 0z" fill="#46304f"/><path d="M1 5.500L6 3l7 2.500L8 9z" fill="#2f1f3c"/><path d="M8 6l2.800 1.500V12.500" fill="none" stroke="#f0a53a" stroke-width="1.300"/></svg>Discount</span></div>
      </article>
      <article class="place">
        <div class="place-top"><div><h3 class="place-name">GIÀ pasta bar</h3><p class="place-addr">Aleje Politechniki 1 (Nowa Sukcesja), 5 min from campus</p></div>
        <div class="rating"><svg class="star" viewBox="0 0 24 24"><path d="M12 2l3.090 6.260L22 9.270l-5 4.870 1.180 6.880L12 17.770l-6.180 3.250L7 14.140 2 9.270l6.910-1.010L12 2z"/></svg>4.7</div></div>
        <div class="tags"><span class="tag diet veg">Vegetarian</span><span class="tag diet vegan">Vegan</span><span class="tag disc"><svg class="cap" viewBox="0 0 14 14"><path d="M4 7h7v3q-3 3-7 0z" fill="#46304f"/><path d="M1 5.500L6 3l7 2.500L8 9z" fill="#2f1f3c"/><path d="M8 6l2.800 1.500V12.500" fill="none" stroke="#f0a53a" stroke-width="1.300"/></svg>Discount</span></div>
      </article>
    </div>
  </section>
</main>
</div>
<aside class="scrollbar"><svg class="sb-arrow" viewBox="0 0 15 15"><path d="M4.500 9.500l3-4 3 4" stroke="#c3c4c9"/></svg><div class="thumb"></div><svg class="sb-arrow" viewBox="0 0 15 15"><path d="M4.500 5.500l3 4 3-4" stroke="#70737c"/></svg></aside>
</body>
</html>
```
FILE: styles.css
```css
* { box-sizing: border-box; margin: 0; padding: 0; }
body { display: flex; width: 1879px; height: 924px; overflow: hidden; background: #f9fafb; font-family: "Noto Sans", "Open Sans", sans-serif; font-size: 15px; line-height: 24px; color: #000; }
button { font: inherit; border: 0; background: none; }
.page { width: 1864px; height: 924px; overflow: hidden; }
.header { height: 72px; background: #2563eb; color: #fff; box-shadow: 0 4px 6px -1px rgba(0,0,0,.12), 0 2px 4px -2px rgba(0,0,0,.12); }
.header-inner { width: 1536px; height: 72px; margin: 0 auto; display: flex; align-items: center; justify-content: space-between; }
.brand { display: flex; align-items: center; gap: 8px; }
.brand-icon { width: 24px; height: 24px; fill: none; stroke: #fff; stroke-width: 2; stroke-linejoin: round; }
.brand-name { font-size: 19px; font-weight: 700; line-height: 28px; padding-top: 1px; letter-spacing: .02px; }
.add-btn { display: flex; align-items: center; gap: 5px; width: 151px; height: 40px; padding-left: 17px; border-radius: 8px; background: #fff; color: #2563eb; font-weight: 500; letter-spacing: .2px; white-space: nowrap; }
.plus { width: 16px; height: 16px; fill: none; stroke: #2563eb; stroke-width: 1.300; }
.main { padding: 16px 180px 0; }
.tabs { display: flex; height: 43px; border-bottom: 1px solid #e5e7eb; margin-bottom: 16px; }
.tab { padding: 8px 16px; color: #4b5563; font-weight: 500; letter-spacing: .1px; white-space: nowrap; }
.tab-active { width: 104px; letter-spacing: .35px; text-align: left; color: #2563eb; border-bottom: 2px solid #2563eb; }
.tab-list { width: 96px; letter-spacing: .2px; text-align: left; }
.card { background: #fff; border-radius: 8px; box-shadow: 0 1px 2px rgba(0,0,0,.05); padding: 16px; }
.filters { height: 129px; margin-bottom: 16px; }
.filters-title { display: flex; align-items: center; gap: 4px; height: 24px; margin-bottom: 8px; font-size: 15px; font-weight: 600; letter-spacing: -.2px; }
.funnel { width: 16px; height: 16px; fill: none; stroke: #2563eb; stroke-width: 1.900; stroke-linejoin: round; }
.filter-grid { display: grid; grid-template-columns: repeat(3, 1fr); gap: 16px; }
.label { display: block; height: 20px; margin-bottom: 4px; font-size: 13.100px; line-height: 20px; color: #4b5563; }
.select { display: flex; align-items: center; justify-content: space-between; height: 41px; padding: 0 3px 0 12px; border: 1px solid #e5e7eb; border-radius: 6px; }
.chev { width: 10px; height: 6px; margin-bottom: 2px; fill: none; stroke: #666; stroke-width: 1.700; }
.map-card { height: 800px; }
.map-title { text-align: center; color: #374151; letter-spacing: .05px; margin-bottom: 8px; }
.map-sub { text-align: center; height: 20px; line-height: 20px; font-size: 13.200px; letter-spacing: -.02px; color: #6b7280; margin-bottom: 16px; }
.map { position: relative; height: 400px; overflow: hidden; margin-bottom: 16px; }
.map-svg { display: block; width: 1472px; height: 400px; }
.park { fill: #c3f1d5; }
.park-light { fill: #d3f8e2; }
.sand { fill: #f6f0e3; }
.water { fill: #90daee; }
.water-line { fill: none; stroke: #90daee; }
.faint { fill: none; stroke: #ebebee; stroke-width: 3; }
.street { fill: none; stroke: #d0dae4; stroke-width: 2.800; stroke-linejoin: round; }
.trail { fill: none; stroke: #76cfab; stroke-width: 2.200; }
.rail { fill: none; stroke: #cfcfd2; stroke-width: 4; }
.rail-ties { fill: none; stroke: #cfcfd2; stroke-width: 12; stroke-dasharray: 2.500 14; }
.road { fill: none; stroke: #d3dce5; stroke-linejoin: round; }
.circ { fill: #d3f8e2; stroke: #c5cedb; stroke-width: 7; }
.motor { fill: none; stroke: #8aa3c0; }
.motor-mid { fill: none; stroke: #b4c5d8; stroke-width: 4; }
.labels text { font-family: Roboto, sans-serif; paint-order: stroke; stroke: #fff; stroke-width: 8px; stroke-linejoin: round; }
.st { font-size: 34px; fill: #2f4358; }
.area { font-size: 35px; font-weight: 500; fill: #202124; }
.poi { font-size: 42px; }
.mid { text-anchor: middle; }
.green { fill: #168359; }
.blue { fill: #1a6fd8; }
.violet { fill: #7d38cf; }
.gray { fill: #566f7d; }
.labels .shield { font-size: 27px; font-weight: 700; fill: #fff; stroke: none; text-anchor: middle; }
.google { font-family: Lato, sans-serif; font-size: 19.500px; font-weight: 700; paint-order: stroke; stroke: #fff; stroke-width: 2px; }
.legal { font-family: Roboto, sans-serif; font-size: 10px; fill: #111; }
.map-type { position: absolute; left: 10px; top: 10px; display: flex; width: 187px; height: 40px; border-radius: 2px; background: #fff; box-shadow: 0 1px 4px -1px rgba(0,0,0,.3); font-family: Roboto, sans-serif; font-size: 18px; line-height: 40px; text-align: center; }
.type-on { width: 83px; border-right: 1px solid #e6e6e6; font-weight: 500; color: #000; }
.type-off { width: 104px; color: #565656; }
.ctl { position: absolute; right: 10px; width: 40px; height: 40px; border-radius: 2px; background: #fff; box-shadow: 0 1px 4px -1px rgba(0,0,0,.3); }
.ctl svg { display: block; fill: none; stroke: #666; stroke-width: 2.400; }
.ctl .hair { stroke-width: 1; }
.full { top: 10px; }
.cam { top: 223px; border-radius: 50%; }
.zoom { top: 295px; height: 81px; }
.nearby { font-size: 15px; line-height: 24px; font-weight: 600; margin-bottom: 8px; }
.places { display: grid; grid-template-columns: 1fr 1fr; gap: 16px; }
.place { height: 150px; padding: 12px; border: 1px solid #e5e7eb; border-radius: 8px; }
.place-top { display: flex; justify-content: space-between; align-items: flex-start; height: 52px; }
.place-name { font-size: 15px; line-height: 24px; font-weight: 600; letter-spacing: -.18px; }
.place-addr { font-size: 13.200px; line-height: 20px; color: #6b7280; }
.rating { display: flex; align-items: center; gap: 4px; width: 52px; height: 28px; padding: 0 8px; border-radius: 4px; background: #eff6ff; font-size: 13.200px; }
.star { width: 14px; height: 14px; flex: none; fill: none; stroke: #eab308; stroke-width: 2; stroke-linejoin: round; }
.tags { display: flex; gap: 4px; }
.tag { display: flex; align-items: center; gap: 5px; height: 24px; padding: 1px 0 0 8px; border-radius: 4px; font-size: 11.300px; letter-spacing: -.05px; white-space: nowrap; }
.budget { width: 54px; background: #dcfce7; color: #15803d; }
.diet { background: #f0fdf4; color: #16a34a; }
.veg { width: 73px; }
.vegan { width: 49px; }
.disc { width: 83px; background: #eff6ff; color: #2563eb; }
.cap { width: 14px; height: 14px; flex: none; }
.scrollbar { width: 15px; height: 924px; display: flex; flex-direction: column; align-items: center; background: #242936; }
.sb-arrow { width: 15px; height: 15px; fill: none; stroke-width: 2; }
.thumb { width: 7px; height: 426px; margin-bottom: 468px; border-radius: 4px; background: #4b4c63; }
```
